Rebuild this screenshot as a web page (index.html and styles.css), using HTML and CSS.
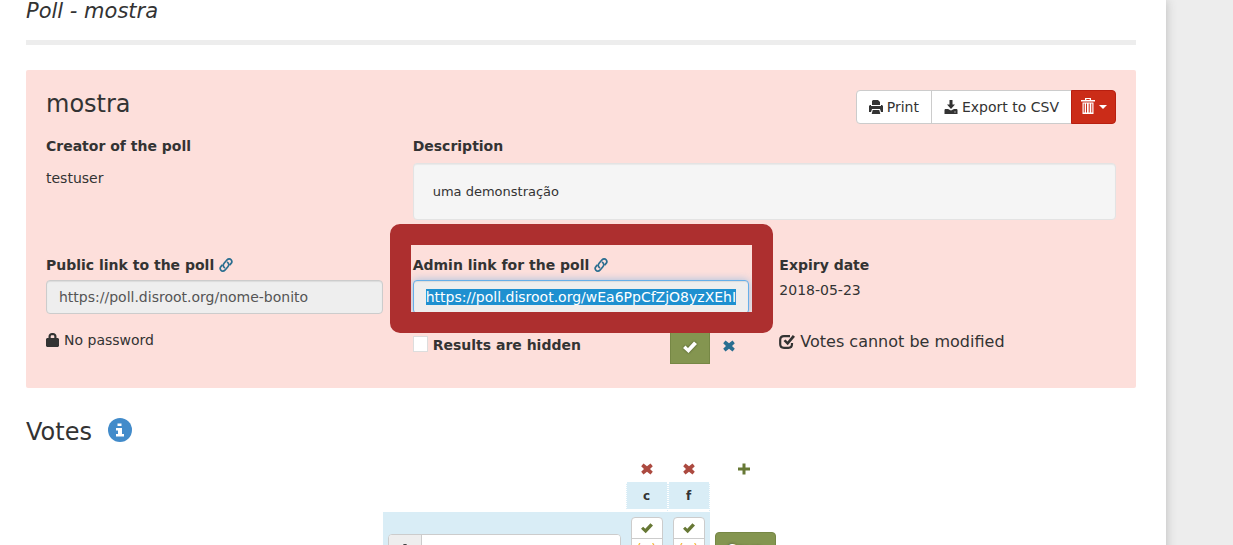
FILE: index.html
```html
<!DOCTYPE html>
<html lang="en">
<head>
<meta charset="utf-8">
<title>Poll - mostra</title>
<link rel="stylesheet" href="styles.css">
</head>
<body>
<svg class="sprite" aria-hidden="true">
  <symbol id="i-print" viewBox="0 0 14 14"><path d="M4 0h5l2 2v3H3V1zM1 5h1v1h10V5h1l1 1v6h-2l-1-3H3l-1 3H0V6zM3.700 10h6.600l1 4H2.700z"/></symbol>
  <symbol id="i-save" viewBox="0 0 14 14"><path d="M5.500 0h3v4.500H11L7 9 3 4.500h2.500zM1 9h3l3 1.500L10 9h3l.5 1v4H.5v-4zM10.500 11.500v1h1v-1z" fill-rule="evenodd"/></symbol>
  <symbol id="i-trash" viewBox="0 0 14 16"><path d="M4 0h6v2h4v1.500H0V2h4zM5.300 1v1h3.400V1zM1.500 4.500h11V16h-11zM2.700 5.500v9h1v-9zM5 5.500v9h1v-9zM7.700 5.500v9h1v-9zM10.300 5.500v9h1v-9z" fill-rule="evenodd"/></symbol>
  <symbol id="i-link" viewBox="0 0 14 14"><g fill="none" stroke="currentColor" stroke-width="1.700"><path d="M6 10C3.500 8.500 4 6.500 5.300 5l2.800-3.200c1.200-1.300 3-1.200 4 0s.9 2.600 0 3.600L10.500 7.300"/><path d="M8 4c2.500 1.500 2 3.500.7 5l-2.800 3.200c-1.200 1.300-3 1.200-4 0s-.9-2.600 0-3.600L3.500 6.700"/></g></symbol>
  <symbol id="i-lock" viewBox="0 0 14 14"><path d="M2.500 5V3.500C2.500 1.500 4 0 6 0h1c2 0 3.500 1.500 3.500 3.500V5H12l1 1v7l-1 1H1l-1-1V6l1-1zM4.700 5h3.600V3.500c0-.8-.5-1.300-1.300-1.300H6c-.8 0-1.300.5-1.300 1.300z" fill-rule="evenodd"/></symbol>
  <symbol id="i-ok" viewBox="0 0 14 12"><path d="M0 7l2.500-2.500L5 7l6-6.500L14 3 5.500 12z"/></symbol>
  <symbol id="i-remove" viewBox="0 0 12 12"><path d="M2.500.5L6 3.300l3.500-2.800 2.300 2.700L9 6l2.800 2.800-2.300 2.700L6 8.700l-3.500 2.800L.2 8.800 3 6 .2 3.200z"/></symbol>
  <symbol id="i-plus" viewBox="0 0 12 12"><path d="M4.500.5h3v4H12v3H7.500v4h-3v-4H0v-3h4.500z"/></symbol>
  <symbol id="i-check" viewBox="0 0 16 14"><path d="M11 1.200H5Q1.200 1.200 1.200 5v4Q1.200 12.800 5 12.800h4.500q3.500 0 3.500-3.800V8" fill="none" stroke="currentColor" stroke-width="2.200"/><path d="M4.500 6L6.500 4.500l2 2L13.800 0 16 1.800 8.700 10.200z"/></symbol>
  <symbol id="i-info" viewBox="0 0 24 24"><circle cx="12" cy="12" r="12"/><path d="M9.500 5.500h4V8h-4zM8 10h6v6h2v2.500H8V16h2v-3.500H8z" fill="#fff"/></symbol>
  <symbol id="i-user" viewBox="0 0 14 14"><path d="M7 0c2 0 3 1.500 3 3.500S9 7 8.700 8L13 10.500l1 3.500H0l1-3.500L5.300 8C5 7 4 5.500 4 3.500S5 0 7 0z"/></symbol>
</svg>
<main class="container">
  <h2 class="page-title">Poll - mostra</h2>
  <hr class="rule">
  <section class="poll">
    <header class="poll-head">
      <h3>mostra</h3>
      <div class="btn-group">
        <button type="button" class="btn"><svg class="icon"><use href="#i-print"/></svg>Print</button>
        <button type="button" class="btn"><svg class="icon"><use href="#i-save"/></svg>Export to CSV</button>
        <button type="button" class="btn btn-danger" aria-label="Delete"><svg class="icon trash"><use href="#i-trash"/></svg><span class="caret"></span></button>
      </div>
    </header>
    <div class="row intro">
      <div>
        <h4 class="label">Creator of the poll</h4>
        <p class="creator">testuser</p>
      </div>
      <div class="wide">
        <h4 class="label">Description</h4>
        <div class="well">uma demonstração</div>
      </div>
    </div>
    <div class="row">
      <div>
        <label class="label" for="public">Public link to the poll <a href="#public" aria-label="Public link"><svg class="icon link"><use href="#i-link"/></svg></a></label>
        <input id="public" class="field" type="text" readonly value="https://poll.disroot.org/nome-bonito">
        <p class="password"><svg class="icon"><use href="#i-lock"/></svg>No password</p>
      </div>
      <div class="admin">
        <label class="label" for="admin">Admin link for the poll <a href="#admin" aria-label="Admin link"><svg class="icon link"><use href="#i-link"/></svg></a></label>
        <input id="admin" class="field" type="text" readonly value="https://poll.disroot.org/wEa6PpCfZjO8yzXEhI/admin">
        <div class="hidden-results">
          <input id="hide" class="tick" type="checkbox">
          <label class="label" for="hide">Results are hidden</label>
          <button type="button" class="btn-ok" aria-label="Save"><svg class="icon"><use href="#i-ok"/></svg></button>
          <button type="button" class="btn-cancel" aria-label="Cancel"><svg class="icon small"><use href="#i-remove"/></svg></button>
        </div>
        <div class="highlight"></div>
      </div>
      <div>
        <h4 class="label">Expiry date</h4>
        <p class="date">2018-05-23</p>
        <p class="rules"><svg class="icon check"><use href="#i-check"/></svg>Votes cannot be modified</p>
      </div>
    </div>
  </section>
  <h3 class="votes-title">Votes <a href="#votes" aria-label="Information"><svg class="info"><use href="#i-info"/></svg></a></h3>
  <table class="votes" id="votes">
    <thead>
      <tr class="tools">
        <td></td>
        <td><button type="button" class="bare remove" aria-label="Remove column c"><svg class="icon small"><use href="#i-remove"/></svg></button></td>
        <td><button type="button" class="bare remove" aria-label="Remove column f"><svg class="icon small"><use href="#i-remove"/></svg></button></td>
        <td><button type="button" class="bare add" aria-label="Add a column"><svg class="icon small"><use href="#i-plus"/></svg></button></td>
      </tr>
      <tr class="names"><td></td><th scope="col">c</th><th scope="col">f</th><td></td></tr>
    </thead>
    <tbody>
      <tr class="entry">
        <td class="name-cell"><div class="name-group"><span class="addon"><svg class="icon user"><use href="#i-user"/></svg></span><input class="name" type="text" aria-label="Your name"></div></td>
        <td><div class="choice"><button type="button" class="yes" aria-label="Yes"><svg class="icon small"><use href="#i-ok"/></svg></button><button type="button" class="maybe" aria-label="If need be">(✔)</button></div></td>
        <td><div class="choice"><button type="button" class="yes" aria-label="Yes"><svg class="icon small"><use href="#i-ok"/></svg></button><button type="button" class="maybe" aria-label="If need be">(✔)</button></div></td>
        <td class="save-cell"><button type="button" class="save">Save</button></td>
      </tr>
    </tbody>
  </table>
</main>
<script src="script.js"></script>
</body>
</html>
```
FILE: styles.css
```css
* { box-sizing: border-box; }
body {
  margin: 0;
  height: 100vh;
  overflow: hidden;
  background: #ededed;
  color: #333;
  font: 14px/20px "DejaVu Sans", sans-serif;
}
h2, h3, h4, p { margin: 0; font-weight: 400; }
button, input { font: inherit; color: inherit; margin: 0; }
a { color: #2a6e90; }
.sprite { display: none; }
.container {
  margin-right: 67px;
  min-height: 100vh;
  padding: 0 30px 0 26px;
  background: #fff;
  box-shadow: 0 0 10px #bbb;
}
.icon { width: 14px; height: 14px; fill: currentColor; flex: none; }
.icon.small { width: 12px; height: 12px; }
.icon.check { width: 16px; }
.icon.trash, .icon.user { height: 16px; }
.icon.link { vertical-align: -2px; }
.page-title { font-size: 21px; line-height: 22px; font-style: italic; }
.rule { margin: 18px 0 25px; border: 0; height: 5px; background: #ededed; }

.poll { padding: 20px 20px 24px; border-radius: 2px; background: #fddfdb; }
.poll-head { display: flex; justify-content: space-between; margin-bottom: 12px; }
h3 { font-size: 24px; line-height: 28px; }
.btn-group { display: flex; }
.btn {
  display: flex;
  align-items: center;
  gap: 4px;
  height: 34px;
  padding: 0 12px;
  border: 1px solid #ccc;
  background: #fff;
}
.btn + .btn { margin-left: -1px; }
.btn:first-child { border-radius: 4px 0 0 4px; }
.btn-danger { padding: 0 8px 0 9px; border-color: #b81f10; border-radius: 0 4px 4px 0; background: #cb2c18; color: #fff; }
.btn-danger .trash { margin-bottom: 2px; }
.caret { border: 4px solid transparent; border-top-color: #fff; border-bottom: 0; }

.row { display: grid; grid-template-columns: repeat(3, 1fr); gap: 30px; }
.wide { grid-column: span 2; }
.intro { margin-bottom: 35px; }
.label { display: block; font-weight: 700; font-size: 14px; line-height: 20px; }
.creator { margin-top: 12px; }
.well {
  margin-top: 7px;
  padding: 18px 19px;
  border: 1px solid #e3e3e3;
  border-radius: 4px;
  background: #f5f5f5;
  box-shadow: inset 0 1px 1px rgba(0, 0, 0, .05);
  font-size: 13px;
  line-height: 19px;
}
.field {
  display: block;
  width: 100%;
  height: 34px;
  margin-top: 5px;
  padding: 6px 12px;
  border: 1px solid #ccc;
  border-radius: 4px;
  outline: 0;
  background: #eee;
  box-shadow: inset 0 1px 1px rgba(0, 0, 0, .08);
  color: #555;
}
.field:focus { border-color: #66afe9; box-shadow: inset 0 1px 1px rgba(0, 0, 0, .08), 0 0 8px rgba(102, 175, 233, .6); }
.field::selection { background: #1e90d0; color: #fff; }
.password { display: flex; align-items: center; gap: 4px; margin-top: 16px; }
.date { margin-top: 5px; }
.rules { display: flex; align-items: center; gap: 5px; margin-top: 32px; font-size: 16px; }

.admin { position: relative; }
.highlight {
  position: absolute;
  top: -31px;
  left: -23px;
  right: -24px;
  height: 109px;
  border: 21px solid #ad2f2f;
  border-radius: 10px;
  pointer-events: none;
}
.hidden-results { display: flex; align-items: center; gap: 5px; margin-top: 16px; }
.tick { appearance: none; width: 15px; height: 16px; margin-bottom: 6px; border: 1px solid #ddd; background: #fff; }
.hidden-results .label { margin-bottom: 4px; }
.btn-ok { display: grid; place-items: center; width: 40px; height: 34px; margin-left: auto; padding: 0; border: 1px solid #768745; background: #849550; color: #fff; }
.btn-ok .icon { filter: drop-shadow(0 0 1px #445022); }
.btn-cancel { width: 28px; height: 34px; margin-right: 6px; padding: 0; border: 0; background: none; color: #2a6e90; }

.votes-title { display: flex; align-items: center; gap: 16px; margin-top: 30px; }
.votes-title a { display: flex; color: #428bca; }
.info { width: 24px; height: 24px; margin-bottom: 4px; fill: currentColor; }
.votes { margin: 14px auto 20px; border-spacing: 0; }
.votes td, .votes th { padding: 0; text-align: center; }
.votes .tools td { height: 22px; vertical-align: top; }
.bare { display: grid; place-items: center; width: 28px; height: 18px; margin: 0 auto; padding: 0; border: 0; background: none; }
.remove { color: #ac4a40; }
.add { color: #677835; }
.tools td:last-child .bare { margin: 0 20px; }
.names th { width: 42px; height: 30px; border: 0 dotted #fff; border-width: 0 1px; border-bottom: 3px solid #fff; background: #d9edf6; font-size: 12px; }
.votes .entry td { height: 70px; background: #d9edf6; vertical-align: top; padding-top: 5px; }
.votes .entry .name-cell { width: 242px; padding: 22px 5px 0; }
.votes .entry .save-cell { width: 70px; padding: 20px 0 0 5px; background: none; text-align: left; }
.name-group { display: flex; height: 34px; border: 1px solid #ccc; border-radius: 4px; background: #fff; overflow: hidden; }
.addon { display: grid; place-items: center; width: 33px; border-right: 1px solid #ccc; background: #eee; }
.name { flex: 1; min-width: 0; border: 0; padding: 0 12px; }
.choice { width: 32px; margin: 0 auto; border: 1px solid #ccc; border-radius: 4px; background: #fff; overflow: hidden; }
.choice button { display: grid; place-items: center; width: 100%; height: 20px; padding: 0; border: 0; background: none; }
.choice .yes { color: #677835; }
.choice .maybe { border-top: 1px solid #ccc; color: #f0a800; font-size: 12px; line-height: 18px; }
.save { display: block; width: 61px; height: 34px; padding: 0; border: 1px solid #768745; border-radius: 4px; background: #849550; color: #fff; text-shadow: 0 0 3px #333; }
```
FILE: script.js
```js
const adminLink = document.getElementById('admin');
adminLink.focus({ preventScroll: true });
adminLink.setSelectionRange(0, adminLink.value.length, 'backward');
```
